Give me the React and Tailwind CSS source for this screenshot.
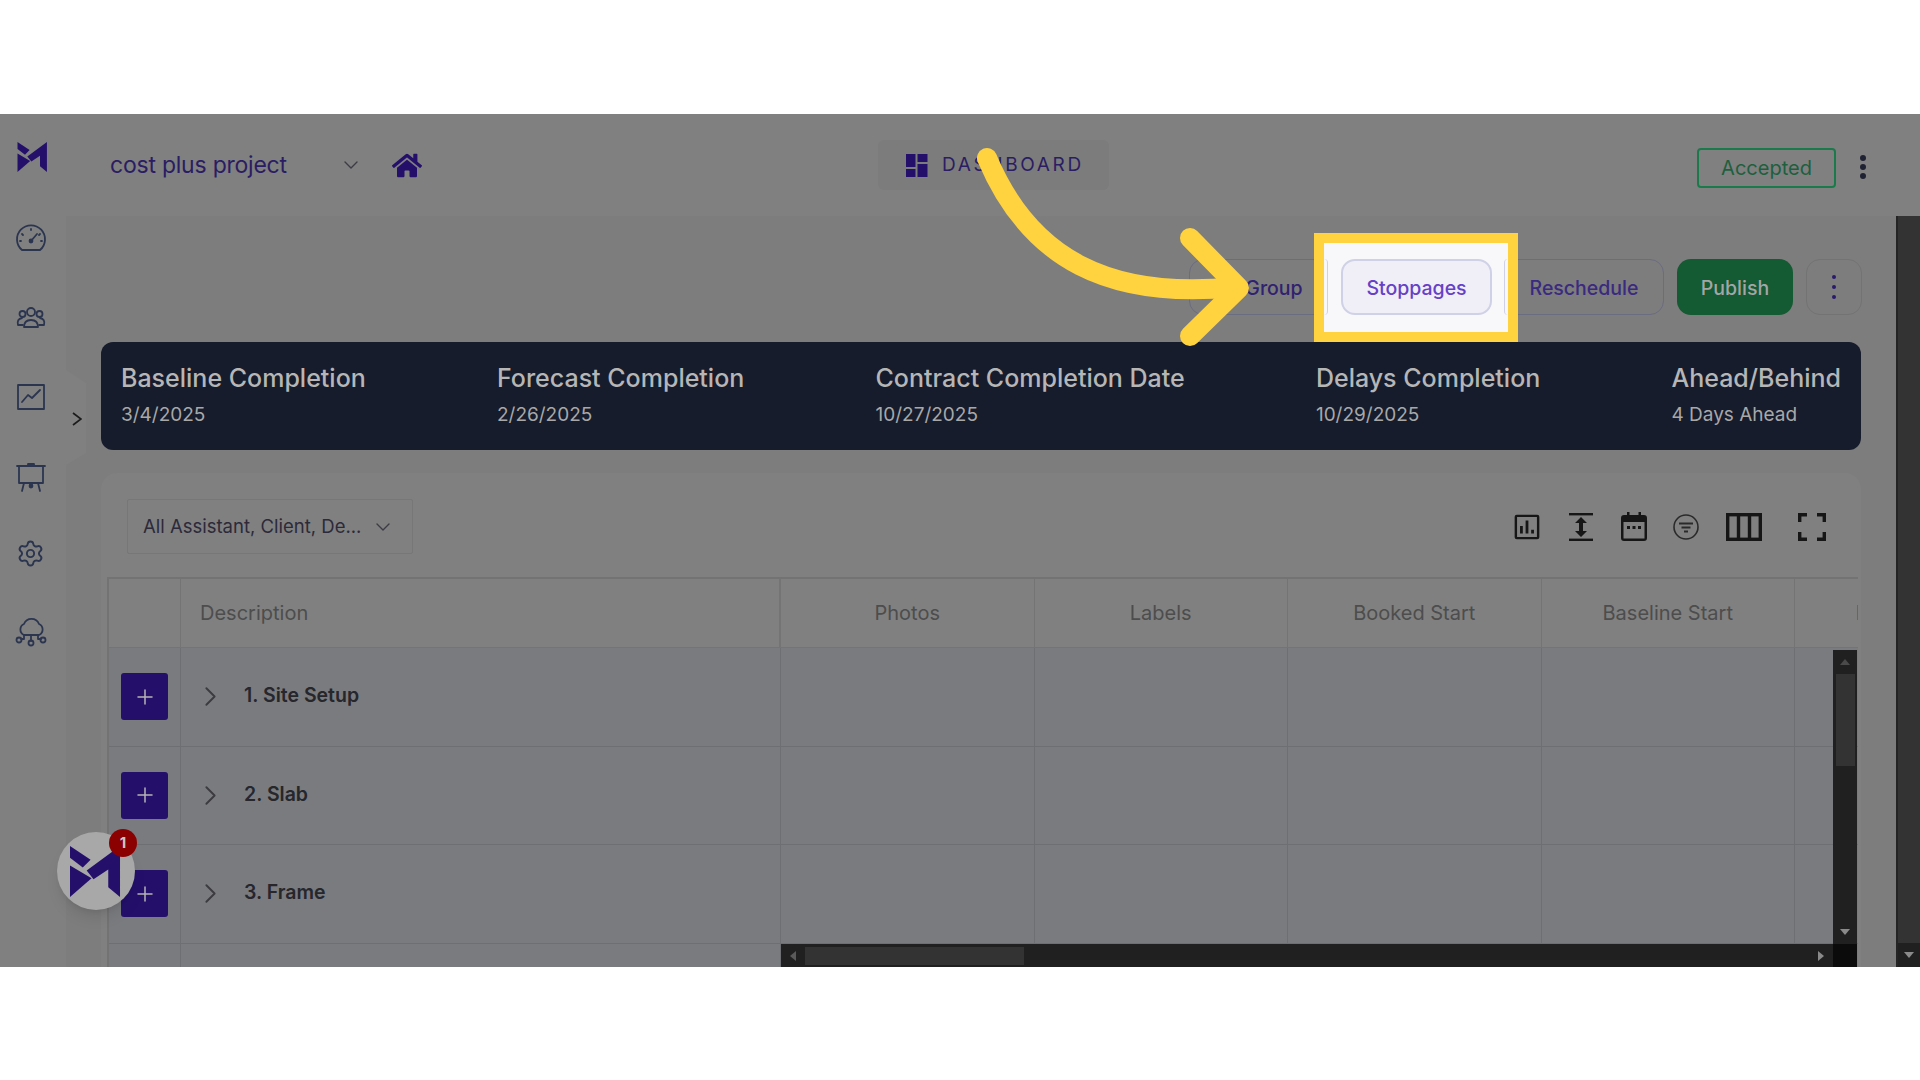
import { ChevronDown, ChevronRight, Plus, Settings } from 'lucide-react';
import { FaHome } from 'react-icons/fa';

const font = { fontFamily: 'Inter, "Liberation Sans", sans-serif' };

function Logo({ className }) {
  return (
    <svg className={className} viewBox="0 0 52 52" fill="#24106b">
      <path d="M0 0 L21 14 L13 22 L0 12 Z" />
      <path d="M0 20 L22 33 L0 52 Z" />
      <path d="M17 25 L51 0 L51 52 L39 42 L39 24 L24 34 Z" />
    </svg>
  );
}

function SideIcon({ children }) {
  return (
    <svg className="w-8 h-8" viewBox="0 0 32 32" fill="none" stroke="#2b3550" strokeWidth="1.8" strokeLinecap="round" strokeLinejoin="round">
      {children}
    </svg>
  );
}

function Sidebar() {
  return (
    <div className="w-[66px] shrink-0 bg-[#808080] flex flex-col items-center relative">
      <Logo className="w-[31px] h-[30px] mt-[28px] -ml-[2px]" />
      <div className="flex flex-col items-center gap-[47px] mt-[51px] -ml-[5px]">
        <SideIcon>
          <path d="M7 27 A14 14 0 1 1 25 27 Z" />
          <path d="M16 18 L22 11" />
          <circle cx="16" cy="18" r="1.5" fill="#2b3550" />
          <path d="M16 6v1M7 11l1 1M25 11l-1 1M5 18h1M26 18h1" />
        </SideIcon>
        <SideIcon>
          <circle cx="16" cy="10" r="4" />
          <circle cx="7.5" cy="12" r="3" />
          <circle cx="24.5" cy="12" r="3" />
          <path d="M9 25 q0 -7 7 -7 q7 0 7 7 Z" />
          <path d="M8 23 H3 q-1.5 -6 4 -7 M24 23 H29 q1.5 -6 -4 -7" />
        </SideIcon>
        <SideIcon>
          <rect x="3" y="4" width="26" height="24" />
          <path d="M7 21 L13 14 L17 17 L25 9" />
        </SideIcon>
        <SideIcon>
          <path d="M2 6 H30 M4 6 V23 H28 V6 M13 6 V4 H19 V6" />
          <path d="M9 23 L7 31 M23 23 L25 31" />
          <circle cx="16" cy="26" r="1.5" fill="#2b3550" />
        </SideIcon>
        <Settings className="w-[29px] h-[29px]" stroke="#2b3550" strokeWidth={1.6} />
        <SideIcon>
          <path d="M9 20 A6 6 0 0 1 9 9 A8 8 0 0 1 24 9 A6 6 0 0 1 24 20 Z" />
          <path d="M16 20 V26 M9 20 V24 H6 M23 20 V24 H26" />
          <circle cx="16" cy="28" r="2.5" />
          <circle cx="4" cy="25" r="2.5" />
          <circle cx="28" cy="25" r="2.5" />
        </SideIcon>
      </div>
      {/* collapse tab sticking out of the rail */}
      <div className="absolute left-[66px] top-[256px] w-[20px] h-[95px] bg-[#808080] [clip-path:polygon(0_0,100%_13px,100%_83px,0_100%)] pl-[6px] pt-[42px]">
        <svg className="w-[10px] h-[14px]" viewBox="0 0 10 14" fill="none" stroke="#1c1c1c" strokeWidth="1.7">
          <path d="M1 1 L9 7 L1 13" />
        </svg>
      </div>
    </div>
  );
}

function Header() {
  return (
    <div className="h-[102px] shrink-0 bg-[#808080] grid grid-cols-3 items-center pl-[44px] pr-[50px]">
      <div className="flex items-center">
        <span className="text-[23px] tracking-[-0.01em] text-[#2b1d63] w-[229px]">cost plus project</span>
        <ChevronDown className="w-[24px] h-[24px]" stroke="#3c3c44" strokeWidth={1.4} />
        <FaHome className="w-[30px] h-[27px] ml-[29px] text-[#24106b]" />
      </div>
      <div className="flex justify-center">
        <div className="w-[231px] h-[50px] ml-[7px] pl-[3px] pt-[1px] bg-[#7c7c7c] rounded-md flex items-center justify-center gap-[14px]">
          <svg className="w-[22px] h-[23px]" viewBox="0 0 22 23" fill="#24106b">
            <rect x="0" y="0" width="9.5" height="13" />
            <rect x="0" y="15" width="9.5" height="8" />
            <rect x="11.5" y="0" width="10" height="8" />
            <rect x="11.5" y="10" width="10" height="13" />
          </svg>
          <span className="text-[19px] tracking-[0.14em] text-[#2b1d63]">DASHBOARD</span>
        </div>
      </div>
      <div className="flex justify-end items-center mr-[13px]">
        <div className="w-[139px] h-[40px] mt-[5px] border-2 border-[#1b7a4b] rounded-[4px] flex items-center justify-center text-[20px] text-[#1d5f3e]">Accepted</div>
        <div className="flex flex-col gap-[3px] ml-[24px] mr-[-9px] mt-[3px]">
          <span className="w-[6px] h-[6px] rounded-full bg-[#1f2233]" />
          <span className="w-[6px] h-[6px] rounded-full bg-[#1f2233]" />
          <span className="w-[6px] h-[6px] rounded-full bg-[#1f2233]" />
        </div>
      </div>
    </div>
  );
}

function ActionButton({ className, children }) {
  return (
    <div className={`h-[56px] pt-[3px] rounded-[14px] flex items-center justify-center text-[19.5px] font-medium ${className}`}>{children}</div>
  );
}

function Actions() {
  return (
    <div className="flex justify-end gap-[13px] pt-[43px] -mr-[1px]">
      <ActionButton className="w-[138px] border border-[#6a6c80] text-[#2f2270] pl-[32px]">Group</ActionButton>
      <ActionButton className="w-[151px] bg-[#f0eff7] border-2 border-[#cfd1e6] text-[#6541c8]">Stoppages</ActionButton>
      <ActionButton className="w-[160px] border border-[#6a6c80] text-[#3a2a80]">Reschedule</ActionButton>
      <ActionButton className="w-[116px] bg-[#145a32] text-[#a5a5a5]">Publish</ActionButton>
      <ActionButton className="w-[56px] border border-[#737373]">
        <div className="flex flex-col gap-[6px] -mt-[3px]">
          <span className="w-[4px] h-[4px] rounded-full bg-[#2a1a6e]" />
          <span className="w-[4px] h-[4px] rounded-full bg-[#2a1a6e]" />
          <span className="w-[4px] h-[4px] rounded-full bg-[#2a1a6e]" />
        </div>
      </ActionButton>
    </div>
  );
}

const summary = [
  ['Baseline Completion', '3/4/2025'],
  ['Forecast Completion', '2/26/2025'],
  ['Contract Completion Date', '10/27/2025'],
  ['Delays Completion', '10/29/2025'],
  ['Ahead/Behind', '4 Days Ahead'],
];

function Summary() {
  return (
    <div className="h-[108px] mt-[27px] pb-[2px] bg-[#161c2c] rounded-[12px] px-[20px] flex justify-between items-center">
      {summary.map(([title, value]) => (
        <div key={title}>
          <div className="text-[25px] font-medium text-[#b6b6b6] leading-[32px]">{title}</div>
          <div className="text-[19px] text-[#a8a8a8] leading-[26px] mt-[8px]">{value}</div>
        </div>
      ))}
    </div>
  );
}

function ToolIcons() {
  return (
    <div className="flex items-center">
      <svg className="w-[26px] h-[26px]" viewBox="0 0 28 28" fill="none" stroke="#161616" strokeWidth="2.6">
        <rect x="2" y="2" width="24" height="24" rx="1" />
        <path d="M8 21 V13 M14 21 V7 M20 21 V17" strokeWidth="3" />
      </svg>
      <svg className="w-[26px] h-[28px] ml-[28px]" viewBox="0 0 26 28" fill="#161616">
        <rect x="1" y="0" width="24" height="2.4" />
        <rect x="1" y="25.6" width="24" height="2.4" />
        <path d="M13 4 L19 10 H15 V18 H19 L13 24 L7 18 H11 V10 H7 Z" />
      </svg>
      <svg className="w-[26px] h-[29px] ml-[27px]" viewBox="0 0 26 29" fill="#161616">
        <path fillRule="evenodd" d="M3 3 H6 V0 H8.5 V3 H17.5 V0 H20 V3 H23 A3 3 0 0 1 26 6 V26 A3 3 0 0 1 23 29 H3 A3 3 0 0 1 0 26 V6 A3 3 0 0 1 3 3 Z M2.5 10 V26.5 H23.5 V10 Z" />
        <rect x="6" y="14" width="3" height="3" />
        <rect x="11.5" y="14" width="3" height="3" />
        <rect x="17" y="14" width="3" height="3" />
      </svg>
      <svg className="w-[26px] h-[26px] ml-[26px]" viewBox="0 0 26 26" fill="none" stroke="#2a2a2a" strokeWidth="1.6">
        <circle cx="13" cy="13" r="12" />
        <path d="M6 9.5 H20 M8.5 13.5 H17.5 M11 17.5 H15" strokeWidth="2.2" />
      </svg>
      <svg className="w-[36px] h-[28px] ml-[27px]" viewBox="0 0 36 28" fill="none" stroke="#161616" strokeWidth="3.4">
        <rect x="1.7" y="1.7" width="32.6" height="24.6" />
        <path d="M12.5 1 V27 M23.5 1 V27" />
      </svg>
      <svg className="w-[28px] h-[28px] ml-[36px]" viewBox="0 0 28 28" fill="none" stroke="#161616" strokeWidth="3.4">
        <path d="M1.7 9 V1.7 H9 M19 1.7 H26.3 V9 M26.3 19 V26.3 H19 M9 26.3 H1.7 V19" />
      </svg>
    </div>
  );
}

const columns = ['Photos', 'Labels', 'Booked Start', 'Baseline Start'];
const rows = ['1. Site Setup', '2. Slab', '3. Frame'];

function Row({ label }) {
  return (
    <div className="h-[98.5px] flex border-b border-[#6e6f72]">
      <div className="w-[74px] shrink-0 border-r border-[#6e6f72] flex items-center justify-center">
        {label && (
          <div className="w-[47px] h-[47px] ml-[2px] bg-[#24106b] rounded-[3px] flex items-center justify-center">
            <Plus className="w-[24px] h-[24px]" stroke="#b4b4b4" strokeWidth={1.5} />
          </div>
        )}
      </div>
      <div className="w-[600px] shrink-0 border-r border-[#6e6f72] flex items-center">
        {label && (
          <>
            <ChevronRight className="w-[33px] h-[33px] ml-[13px]" stroke="#3c3c40" strokeWidth={1.4} />
            <span className="ml-[17px] -mt-[2px] text-[19.5px] font-semibold text-[#26262b]">{label}</span>
          </>
        )}
      </div>
      {[0, 1, 2, 3].map((i) => (
        <div key={i} className="w-[253.5px] shrink-0 border-r border-[#6e6f72]" />
      ))}
    </div>
  );
}

function Table() {
  return (
    <div className="relative mt-[23px] h-[400px] overflow-hidden border-t-2 border-l-2 border-[#737373]">
      <div className="h-[69px] flex border-b border-[#747474] text-[20px] text-[#4d4d4d]">
        <div className="w-[72px] shrink-0 border-r border-[#747474]" />
        <div className="w-[600px] shrink-0 border-r-2 border-[#747474] flex items-center pl-[19px]">Description</div>
        {columns.map((c) => (
          <div key={c} className="w-[253.5px] shrink-0 border-r border-[#747474] flex items-center justify-center">{c}</div>
        ))}
        <div className="w-[253.5px] shrink-0 flex items-center justify-center pl-[9px] whitespace-nowrap">Baseline Finish</div>
      </div>
      <div className="bg-[#7a7b7f] h-full -ml-[2px]">
        {rows.map((r) => (
          <Row key={r} label={r} />
        ))}
        <Row />
      </div>
      {/* vertical scrollbar */}
      <div className="absolute top-[71px] left-[1724px] w-[24px] h-[294px] bg-[#202020] flex flex-col items-center">
        <div className="w-0 h-0 mt-[9px] border-x-[5px] border-x-transparent border-b-[6px] border-b-[#4a4a4a]" />
        <div className="w-[19px] h-[92px] mt-[9px] bg-[#333333]" />
        <div className="w-0 h-0 mt-auto mb-[9px] border-x-[5px] border-x-transparent border-t-[6px] border-t-[#8a8a8a]" />
      </div>
      {/* horizontal scrollbar */}
      <div className="absolute top-[365px] left-[672px] w-[1052px] h-[24px] bg-[#202020] flex items-center">
        <div className="w-0 h-0 ml-[9px] border-y-[5px] border-y-transparent border-r-[6px] border-r-[#5a5a5a]" />
        <div className="w-[219px] h-[18px] ml-[9px] bg-[#333333]" />
        <div className="w-0 h-0 ml-auto mr-[9px] border-y-[5px] border-y-transparent border-l-[6px] border-l-[#8a8a8a]" />
      </div>
      <div className="absolute top-[365px] left-[1724px] w-[24px] h-[24px] bg-[#0b0b0b]" />
    </div>
  );
}

function Card() {
  return (
    <div className="mt-[23px] bg-[#808080] rounded-t-[16px] pl-[6px] pr-[3px] pt-[26px]">
      <div className="flex items-center justify-between ml-[20px] pr-[32px]">
        <div className="w-[286px] h-[55px] border border-[#777777] rounded-[2px] flex items-center pl-[15px] text-[18.5px] text-[#2c2a3a]">
          <span className="w-[228px] whitespace-nowrap">All Assistant, Client, De...</span>
          <ChevronDown className="w-[24px] h-[24px]" stroke="#3c3c44" strokeWidth={1.4} />
        </div>
        <ToolIcons />
      </div>
      <Table />
    </div>
  );
}

export default function App() {
  return (
    <div className="relative h-screen bg-white overflow-hidden" style={font}>
      <div className="h-[114px]" />
      <div className="h-[853px] flex overflow-hidden bg-[#7d7d7d]">
        <Sidebar />
        <div className="flex-1 min-w-0 flex flex-col">
          <Header />
          <div className="flex-1 flex min-h-0">
            <div className="flex-1 min-w-0 pl-[35px] pr-[35px] overflow-hidden">
              <Actions />
              <Summary />
              <Card />
            </div>
            <div className="w-[24px] shrink-0 bg-[#333333] border-l-2 border-[#242424] flex flex-col justify-end items-center">
              <div className="w-full h-[24px] bg-[#202020] flex items-center justify-center">
                <div className="w-0 h-0 border-x-[5px] border-x-transparent border-t-[6px] border-t-[#8a8a8a]" />
              </div>
            </div>
          </div>
        </div>
      </div>

      {/* floating chat bubble */}
      <div className="absolute left-[57px] top-[832px] w-[78px] h-[78px] rounded-full bg-[#a8a8a8] shadow-lg flex items-center justify-center">
        <Logo className="w-[51px] h-[53px] mt-[1px] -ml-[1px]" />
        <div className="absolute -top-[3px] left-[52px] w-[28px] h-[28px] rounded-full bg-[#8b0000] flex items-center justify-center text-[15px] font-bold text-[#c8c8c8]">1</div>
      </div>

      {/* highlight box around the Stoppages button */}
      <div className="absolute left-[1314px] top-[233px] w-[204px] h-[109px] border-[10px] border-[#ffd23f] bg-[#f8f8fa] flex items-center">
        <div className="absolute left-0 top-[16px] w-[4px] h-[56px] border-r border-[#cfd1e6] rounded-r-[14px]" />
        <div className="absolute left-[17px] top-[16px] w-[151px] h-[56px] pt-[3px] rounded-[14px] bg-[#f0eff7] border-2 border-[#cfd1e6] flex items-center justify-center text-[19.5px] font-medium text-[#6541c8]">Stoppages</div>
        <div className="absolute right-0 top-[16px] w-[4px] h-[56px] border-l border-[#cfd1e6] rounded-l-[14px]" />
      </div>

      {/* arrow */}
      <svg className="absolute inset-0 w-full h-full pointer-events-none" viewBox="0 0 1920 1080" fill="none" stroke="#ffd23f" strokeWidth="20" strokeLinecap="round" strokeLinejoin="round">
        <path d="M987 158 C1030 260 1110 300 1236 287" />
        <path d="M1190 238 L1239 288 L1190 336" />
      </svg>
    </div>
  );
}
